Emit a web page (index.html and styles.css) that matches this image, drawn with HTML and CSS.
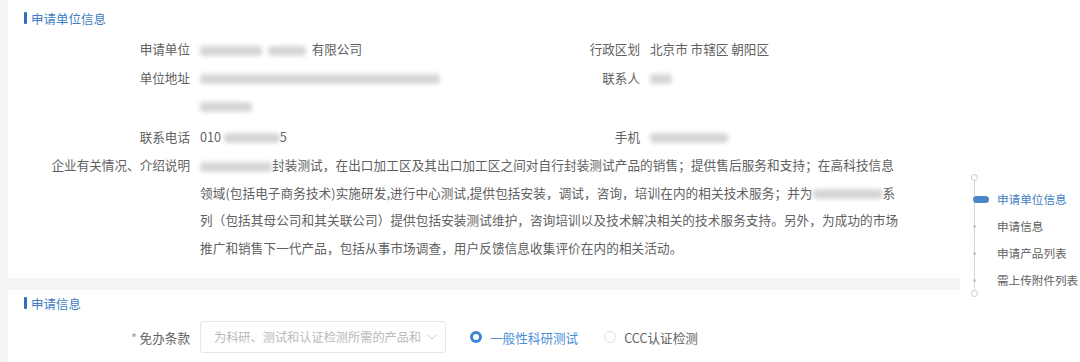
FILE: index.html
```html
<!DOCTYPE html>
<html lang="zh-CN">
<head>
<meta charset="utf-8">
<link rel="stylesheet" href="styles.css">
</head>
<body>
<div class="page">
  <main class="main">
    <section class="card card-1">
      <h2 class="sec-title">申请单位信息</h2>
      <div class="form-grid">
        <div class="lbl">申请单位</div>
        <div class="val"><span class="blur w62"></span><span class="blur w38 ml6"></span> &nbsp;有限公司</div>
        <div class="lbl">行政区划</div>
        <div class="val">北京市 市辖区 朝阳区</div>

        <div class="lbl">单位地址</div>
        <div class="val"><span class="blur w240"></span><br><span class="blur w52"></span></div>
        <div class="lbl">联系人</div>
        <div class="val"><span class="blur w22"></span></div>

        <div class="lbl lbl-gap">联系电话</div>
        <div class="val lbl-gap">010 <span class="blur w56"></span>5</div>
        <div class="lbl lbl-gap">手机</div>
        <div class="val lbl-gap"><span class="blur w78"></span></div>

        <div class="lbl">企业有关情况、介绍说明</div>
        <div class="val desc"><span class="blur w72"></span>封装测试，在出口加工区及其出口加工区之间对自行封装测试产品的销售；提供售后服务和支持；在高科技信息<br>领域(包括电子商务技术)实施研发,进行中心测试,提供包括安装，调试，咨询，培训在内的相关技术服务；并为<span class="blur w70"></span>系<br>列（包括其母公司和其关联公司）提供包括安装测试维护，咨询培训以及技术解决相关的技术服务支持。另外，为成功的市场<br>推广和销售下一代产品，包括从事市场调查，用户反馈信息收集评价在内的相关活动。</div>
      </div>
    </section>
    <section class="card card-2">
      <h2 class="sec-title">申请信息</h2>
      <div class="form-row">
        <div class="lbl"><span class="req">*</span> 免办条款</div>
        <div class="select">
          <span class="select-text">为科研、测试和认证检测所需的产品和</span>
          <svg class="chev" width="10" height="6" viewBox="0 0 10 6"><path d="M1 1l4 4 4-4" fill="none" stroke="#c8c8c8" stroke-width="1"/></svg>
        </div>
        <label class="radio on"><span class="dot"></span>一般性科研测试</label>
        <label class="radio"><span class="dot"></span>CCC认证检测</label>
      </div>
    </section>
  </main>
  <aside class="anchor">
    <div class="anchor-rail">
      <span class="ring ring-top"></span>
      <span class="ring ring-bottom"></span>
    </div>
    <ul class="anchor-list">
      <li class="active"><span class="mark"></span>申请单位信息</li>
      <li><span class="mark"></span>申请信息</li>
      <li><span class="mark"></span>申请产品列表</li>
      <li><span class="mark"></span>需上传附件列表</li>
    </ul>
  </aside>
</div>
</body>
</html>
```

FILE: styles.css
```css
* { box-sizing: border-box; }
html, body {
  margin: 0;
  padding: 0;
  background: #ffffff;
  font-family: "Noto Sans CJK SC", "Noto Sans", sans-serif;
  color: #616161;
}
.page {
  display: flex;
  width: 1080px;
  height: 362px;
  overflow: hidden;
}
.main {
  width: 960px;
  background: #f4f4f4;
  padding-left: 8px;
  display: flex;
  flex-direction: column;
  gap: 12px;
}
.card {
  background: #ffffff;
  padding: 8px 50px 0 16px;
}
.card-1 { height: 278px; }
.card-2 { flex: 1; padding-top: 3px; }
.sec-title {
  margin: 0;
  display: flex;
  align-items: center;
  gap: 4px;
  height: 20px;
  font-size: 12.5px;
  font-weight: normal;
  color: #3d7ec2;
}
.sec-title::before {
  content: "";
  width: 3px;
  height: 12px;
  background: #2f6fb5;
  border-radius: 1px;
}
.form-grid {
  margin-top: 7px;
  display: grid;
  grid-template-columns: 166px 248px 182px 1fr;
  column-gap: 10px;
  row-gap: 1px;
  font-size: 12.6px;
  line-height: 27.5px;
}
.lbl {
  text-align: right;
  color: #616161;
  white-space: nowrap;
}
.val { color: #616161; white-space: nowrap; }
.lbl-gap { margin-top: 3px; }
.desc { grid-column: 2 / 5; letter-spacing: 0.1px; }
.blur {
  display: inline-block;
  height: 10px;
  vertical-align: middle;
  background: #d6d6d6;
  border-radius: 4px;
  filter: blur(2px);
}
.w22 { width: 22px; }
.w38 { width: 38px; }
.w52 { width: 52px; }
.w56 { width: 56px; }
.w62 { width: 62px; }
.w70 { width: 70px; }
.w72 { width: 72px; }
.w78 { width: 78px; }
.w240 { width: 240px; }
.ml6 { margin-left: 6px; }

.form-row {
  margin-top: 8px;
  display: flex;
  align-items: center;
  font-size: 12.6px;
}
.form-row .lbl { width: 166px; }
.req { color: #999; }
.select {
  margin-left: 10px;
  width: 246px;
  height: 32px;
  border: 1px solid #e6e6e6;
  border-radius: 3px;
  display: flex;
  align-items: center;
  justify-content: space-between;
  padding: 0 8px 0 13px;
  color: #b9b9b9;
  font-size: 12.2px;
}
.select-text { white-space: nowrap; }
.chev { flex: none; margin-left: 4px; }
.radio {
  display: flex;
  align-items: center;
  gap: 8px;
  margin-left: 24px;
  color: #616161;
}
.radio + .radio { margin-left: 26px; }
.radio .dot {
  width: 12px;
  height: 12px;
  border-radius: 50%;
  border: 1px solid #e2e2e2;
  background: #fff;
}
.radio.on { color: #4a8fd6; }
.radio.on .dot {
  border: 3.5px solid #3f86d0;
  background: #ffffff;
}

.anchor {
  flex: 1;
  position: relative;
  padding-left: 5px;
}
.anchor-rail {
  position: absolute;
  left: 14px;
  top: 175px;
  width: 1px;
  height: 119px;
  background: #d6d6d6;
}
.ring {
  position: absolute;
  left: -3px;
  width: 7px;
  height: 7px;
  border: 1px solid #c9c9c9;
  border-radius: 50%;
  background: #fff;
}
.ring-top { top: -1px; }
.ring-bottom { bottom: -3px; }
.anchor-list {
  list-style: none;
  margin: 0;
  padding: 186px 0 0 0;
  font-size: 11.6px;
  line-height: 27px;
  color: #616161;
  position: relative;
}
.anchor-list li {
  position: relative;
  padding-left: 32px;
  white-space: nowrap;
}
.anchor-list .mark {
  position: absolute;
  left: 8px;
  top: 12px;
  width: 3px;
  height: 3px;
  border-radius: 50%;
  background: #c4c4c4;
}
.anchor-list li.active { color: #3d7ec2; }
.anchor-list li.active .mark {
  left: 8px;
  top: 10px;
  width: 16px;
  height: 7px;
  border-radius: 4px;
  background: #4a86c8;
}
```
